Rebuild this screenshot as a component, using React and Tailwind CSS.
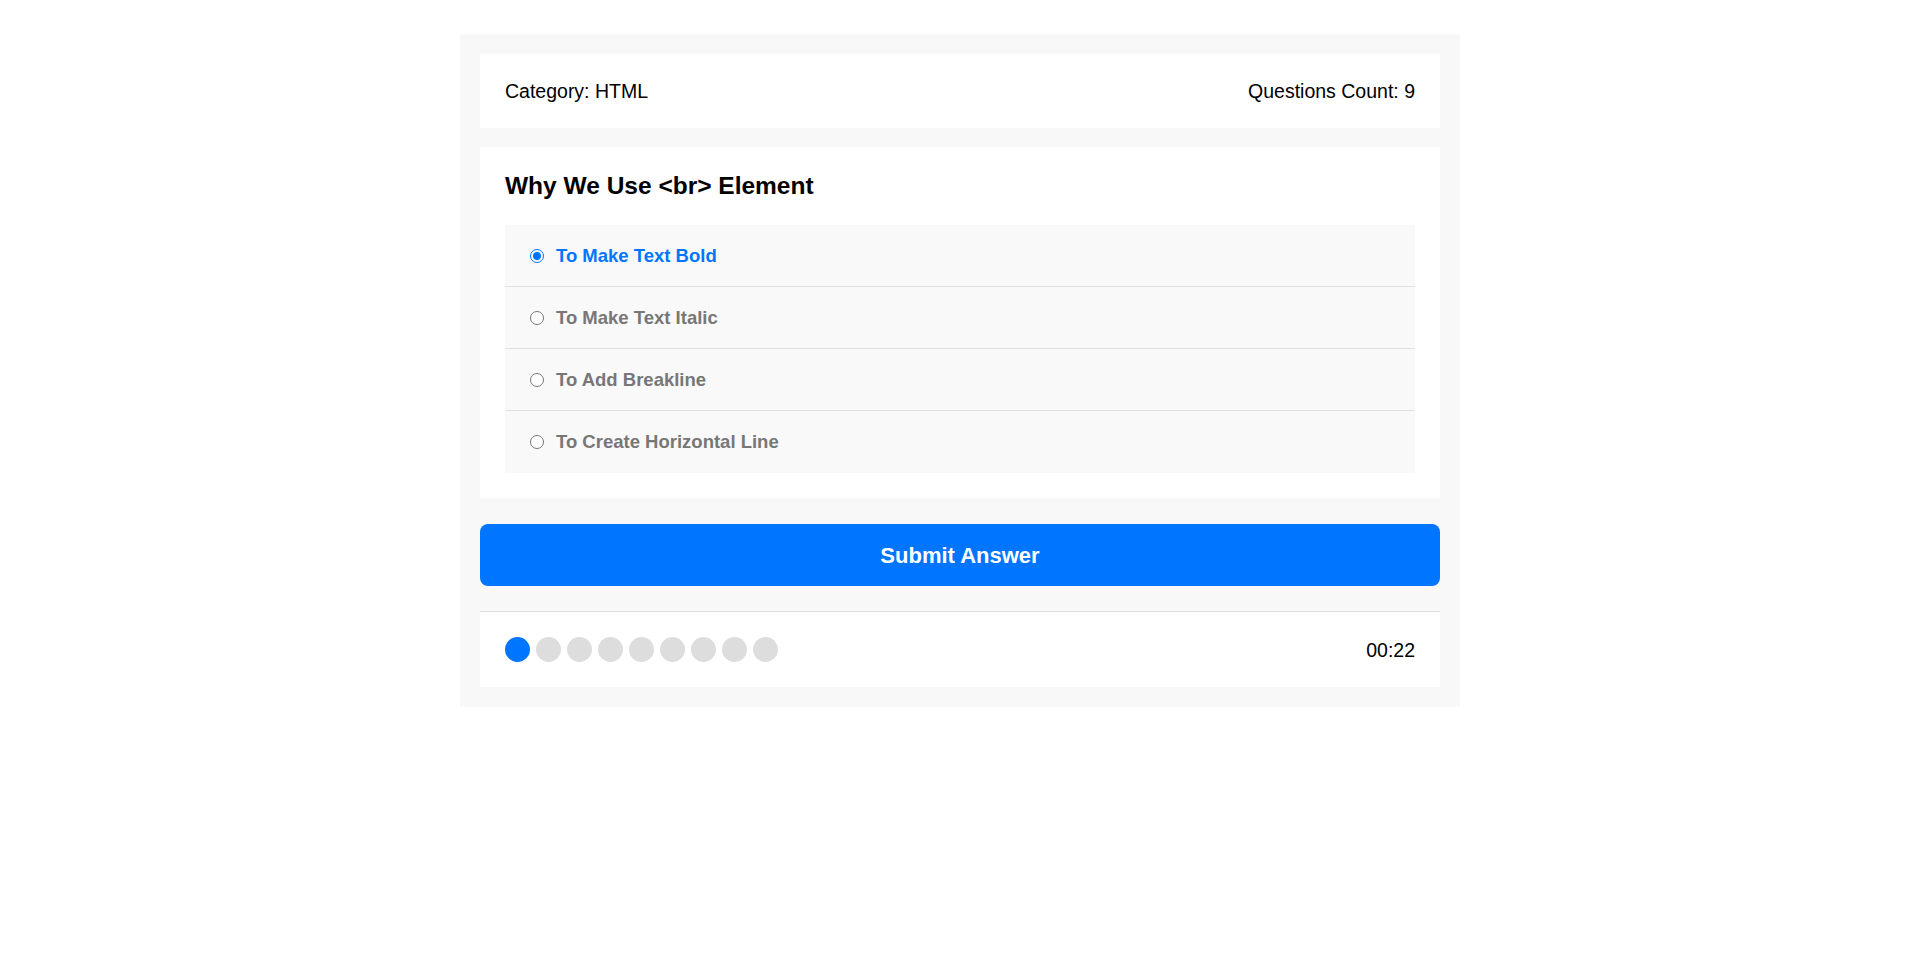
import { useState } from "react";

const answers = [
    "To Make Text Bold",
    "To Make Text Italic",
    "To Add Breakline",
    "To Create Horizontal Line",
];

export default function App() {
    const [picked, setPicked] = useState(0);
    const total = 9;
    const current = 0;

    return (
        <div
            className="min-h-screen bg-white pt-[34px] text-black"
            style={{ fontFamily: '"Liberation Sans", Arial, sans-serif' }}
        >
            <div className="mx-auto w-[1000px] bg-[#f8f8f8] p-5">
                {/* Quiz info */}
                <div className="flex items-center justify-between bg-white p-[25px] text-[19.5px] leading-6">
                    <div>Category: HTML</div>
                    <div>Questions Count: {total}</div>
                </div>

                {/* Question */}
                <div className="mt-[19px] bg-white p-[25px]">
                    <h2 className="text-[24.5px] font-bold leading-[28px]">
                        Why We Use &lt;br&gt; Element
                    </h2>
                    <div className="mt-[25px]">
                        {answers.map((a, i) => {
                            const on = picked === i;
                            return (
                                <div
                                    key={i}
                                    onClick={() => setPicked(i)}
                                    className={`flex h-[62px] cursor-pointer items-center gap-3 bg-[#f9f9f9] pl-[25px] ${
                                        i < answers.length - 1 ? "border-b border-[#dfdfdf]" : ""
                                    }`}
                                >
                                    {on ? (
                                        <span className="flex h-[14px] w-[14px] items-center justify-center rounded-full border-[1.5px] border-[#0075ff] bg-white">
                                            <span className="h-[8px] w-[8px] rounded-full bg-[#0075ff]" />
                                        </span>
                                    ) : (
                                        <span className="h-[14px] w-[14px] rounded-full border border-[#767676] bg-white" />
                                    )}
                                    <span
                                        className={`text-[18.5px] font-bold ${
                                            on ? "text-[#0075ff]" : "text-[#777]"
                                        }`}
                                    >
                                        {a}
                                    </span>
                                </div>
                            );
                        })}
                    </div>
                </div>

                {/* Submit */}
                <button className="mt-[26px] flex h-[62px] w-full items-center justify-center rounded-lg bg-[#0075ff] text-[22px] font-bold text-white">
                    Submit Answer
                </button>

                {/* Bullets + countdown */}
                <div className="mt-[25px] flex items-center justify-between border-t border-[#dfdfdf] bg-white p-[25px]">
                    <div className="flex gap-[6px]">
                        {Array.from({ length: total }).map((_, i) => (
                            <span
                                key={i}
                                className={`h-[25px] w-[25px] rounded-full ${
                                    i === current ? "bg-[#0075ff]" : "bg-[#ddd]"
                                }`}
                            />
                        ))}
                    </div>
                    <div className="text-[19.5px] leading-6">00:22</div>
                </div>
            </div>
        </div>
    );
}
